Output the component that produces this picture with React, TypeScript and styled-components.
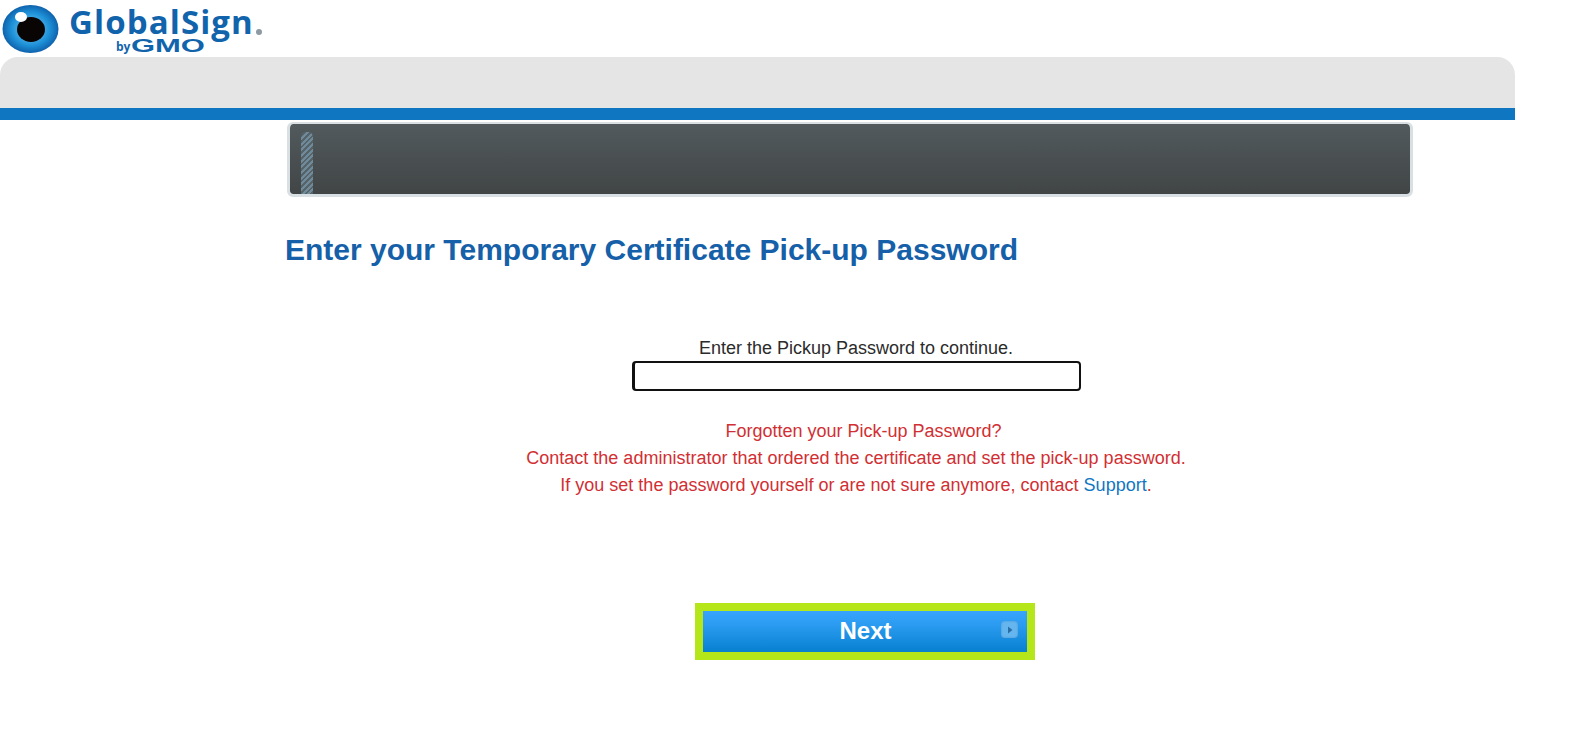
import React from 'react';
import styled, { createGlobalStyle } from 'styled-components';

const GlobalStyle = createGlobalStyle`
  html, body {
    margin: 0;
    padding: 0;
    background: #fff;
    font-family: "Liberation Sans", Arial, sans-serif;
  }
`;

const Page = styled.div`
  width: 1515px;
  height: 729px;
  overflow: hidden;
`;

const LogoRow = styled.header`
  display: flex;
  align-items: flex-start;
  height: 57px;
  padding: 5px 0 0 2px;
  box-sizing: border-box;
`;

const LogoText = styled.div`
  display: flex;
  flex-direction: column;
  margin-left: 10px;
  color: #1164ac;
  font-family: "Open Sans", sans-serif;
`;

const Brand = styled.div`
  display: flex;
  align-items: flex-end;
  height: 33px;
  font-size: 33px;
  font-weight: 700;
  line-height: 33px;
  letter-spacing: 1.1px;
`;

const Registered = styled.span`
  margin: 0 0 3px 2px;
  width: 6px;
  height: 6px;
  border-radius: 50%;
  background: #8d9aa3;
`;

const ByLine = styled.div`
  display: flex;
  align-items: flex-end;
  height: 15px;
  margin: 1px 0 0 47px;
  line-height: 15px;
`;

const By = styled.span`
  font-size: 12px;
  font-weight: 700;
  margin-right: 1px;
`;

const Gmo = styled.span`
  display: inline-block;
  font-family: "Liberation Sans", sans-serif;
  font-size: 18px;
  font-weight: 700;
  transform: scaleX(1.72);
  transform-origin: left center;
`;

const TopBar = styled.div`
  height: 63px;
  box-sizing: border-box;
  background: #e5e5e5;
  border-bottom: 12px solid #0f76c2;
  border-radius: 18px 18px 0 0;
`;

const Content = styled.main`
  width: 1142px;
  margin-left: 285px;
  display: flex;
  flex-direction: column;
`;

const Banner = styled.div`
  width: 1109px;
  height: 62px;
  margin: 2px 0 0 2px;
  padding: 8px 0 0 11px;
  border-style: solid;
  border-color: #d9e0e3;
  border-width: 2px 3px 3px 3px;
  border-radius: 6px;
  background: linear-gradient(#525a5d, #414546);
  background-clip: padding-box;
`;

const Hatch = styled.div`
  width: 12px;
  height: 62px;
  border-radius: 5px 5px 0 0;
  background: repeating-linear-gradient(135deg, #6f8b9b 0 2px, #56646a 2px 4px);
`;

const Title = styled.h1`
  margin: 35px 0 0;
  color: #1560a8;
  font-size: 30px;
  font-weight: 700;
  line-height: 36px;
`;

const Prompt = styled.p`
  margin: 68px 0 0;
  color: #2b2b2b;
  font-size: 18px;
  line-height: 25px;
  text-align: center;
`;

const PasswordInput = styled.input`
  display: block;
  width: 449px;
  height: 30px;
  margin: 0 auto 0 347px;
  padding: 0 3px;
  box-sizing: border-box;
  border: 2px solid #111;
  border-left-width: 3px;
  border-radius: 4px;
  outline: none;
  background: #fff;
`;

const Notice = styled.div`
  margin-top: 27px;
  color: #d12f33;
  font-size: 18px;
  line-height: 27px;
  text-align: center;
`;

const NoticeLead = styled.span`
  display: block;
  padding-left: 15px;
`;

const SupportLink = styled.a`
  color: #0f76c2;
  text-decoration: none;
`;

const ButtonRow = styled.div`
  display: flex;
  margin: 104px 0 0 410px;
`;

const NextButton = styled.button`
  position: relative;
  width: 340px;
  height: 57px;
  box-sizing: border-box;
  border: 8px solid #b4e61a;
  padding: 0 0 2px 1px;
  background: linear-gradient(#38a4fd 0%, #2a9bf0 35%, #0780d0 100%);
  color: #fff;
  font-family: inherit;
  font-size: 24px;
  font-weight: 700;
`;

const ArrowBadge = styled.span`
  position: absolute;
  right: 9px;
  top: 10px;
  width: 17px;
  height: 17px;
  display: flex;
  align-items: center;
  justify-content: center;
  border-radius: 4px;
  background: #65b5ee;
  box-shadow: inset 0 0 2px #3f8fd0;
`;

const EyeLogo = () => (
  <svg width="57" height="48" viewBox="0 0 57 48" aria-hidden="true">
    <defs>
      <radialGradient id="iris" cx="50%" cy="50%" r="50%">
        <stop offset="35%" stopColor="#4fb2ea" />
        <stop offset="70%" stopColor="#1c8fd6" />
        <stop offset="100%" stopColor="#0f62ac" />
      </radialGradient>
    </defs>
    <ellipse cx="28.5" cy="24" rx="28" ry="24" fill="url(#iris)" />
    <ellipse cx="29" cy="24.5" rx="14" ry="12.5" fill="#0a0505" />
    <ellipse cx="19" cy="12" rx="6" ry="5" fill="#fff" />
  </svg>
);

export default function App() {
  return (
    <Page>
      <GlobalStyle />
      <LogoRow>
        <EyeLogo />
        <LogoText>
          <Brand>
            GlobalSign
            <Registered />
          </Brand>
          <ByLine>
            <By>by</By>
            <Gmo>GMO</Gmo>
          </ByLine>
        </LogoText>
      </LogoRow>
      <TopBar />
      <Content>
        <Banner>
          <Hatch />
        </Banner>
        <Title>Enter your Temporary Certificate Pick-up Password</Title>
        <Prompt>Enter the Pickup Password to continue.</Prompt>
        <PasswordInput type="password" />
        <Notice>
          <NoticeLead>Forgotten your Pick-up Password?</NoticeLead>
          Contact the administrator that ordered the certificate and set the pick-up password.
          <br />
          If you set the password yourself or are not sure anymore, contact{' '}
          <SupportLink href="#">Support</SupportLink>.
        </Notice>
        <ButtonRow>
          <NextButton type="button">
            Next
            <ArrowBadge>
              <svg width="8" height="10" viewBox="0 0 8 10" aria-hidden="true">
                <path d="M2 1.5l4.5 3.5-4.5 3.5z" fill="#2a6ea8" />
              </svg>
            </ArrowBadge>
          </NextButton>
        </ButtonRow>
      </Content>
    </Page>
  );
}
